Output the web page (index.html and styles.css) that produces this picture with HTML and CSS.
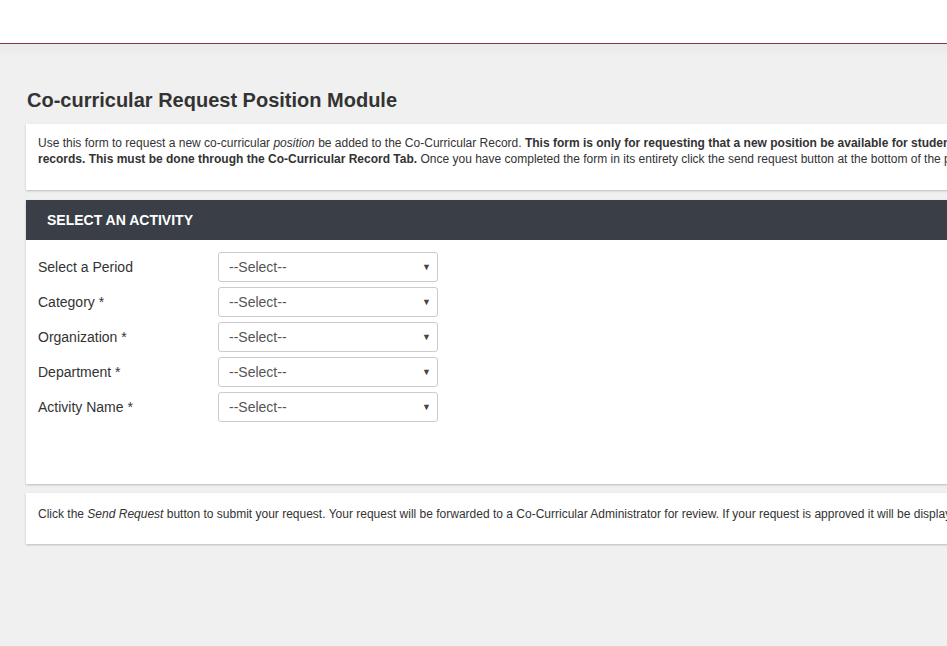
FILE: index.html
```html
<!DOCTYPE html>
<html>
<head>
<meta charset="utf-8">
<link rel="stylesheet" href="styles.css">
</head>
<body>
<header class="topbar"></header>
<main class="content">
  <h1 class="page-title">Co-curricular Request Position Module</h1>
  <section class="panel intro">
    <p>Use this form to request a new co-curricular <em>position</em> be added to the Co-Curricular Record. <strong>This form is only for requesting that a new position be available for students to add to their co-curricular<br>records. This must be done through the Co-Curricular Record Tab.</strong> Once you have completed the form in its entirety click the send request button at the bottom of the page.</p>
  </section>
  <section class="panel activity">
    <div class="panel-heading">SELECT AN ACTIVITY</div>
    <div class="panel-body">
      <div class="form-row"><label>Select a Period</label><div class="select"><span>--Select--</span><span class="caret">&#9660;</span></div></div>
      <div class="form-row"><label>Category *</label><div class="select"><span>--Select--</span><span class="caret">&#9660;</span></div></div>
      <div class="form-row"><label>Organization *</label><div class="select"><span>--Select--</span><span class="caret">&#9660;</span></div></div>
      <div class="form-row"><label>Department *</label><div class="select"><span>--Select--</span><span class="caret">&#9660;</span></div></div>
      <div class="form-row"><label>Activity Name *</label><div class="select"><span>--Select--</span><span class="caret">&#9660;</span></div></div>
    </div>
  </section>
  <section class="panel footer-note">
    <p>Click the <em>Send Request</em> button to submit your request. Your request will be forwarded to a Co-Curricular Administrator for review. If your request is approved it will be displayed in the list of available positions.</p>
  </section>
</main>
</body>
</html>
```

FILE: styles.css
```css
html, body {
  margin: 0;
  padding: 0;
}
body {
  background: #f0f0f0;
  font-family: "Liberation Sans", Arial, sans-serif;
  color: #333;
  overflow: hidden;
  width: 947px;
  height: 646px;
}
.topbar {
  height: 43px;
  background: #fff;
  border-bottom: 1px solid #8a3350;
}
.content {
  padding: 45px 0 0 26px;
  width: 1300px;
  background: linear-gradient(#e9e9e9, #f0f0f0 14px);
}
.page-title {
  margin: 0 0 13px 1px;
  font-size: 20px;
  line-height: 22px;
  font-weight: bold;
  color: #333;
}
.panel {
  background: #fff;
  box-shadow: 0 1px 2px rgba(0,0,0,0.22);
  margin-bottom: 10px;
}
.panel p {
  margin: 0;
  font-size: 12px;
  line-height: 16px;
  white-space: nowrap;
}
.intro {
  padding: 11px 12px 23px;
}
.panel-heading {
  background: #3a3f47;
  color: #fff;
  font-weight: bold;
  font-size: 14px;
  height: 40px;
  line-height: 40px;
  padding-left: 21px;
}
.panel-body {
  padding: 12px 12px 62px;
  display: flex;
  flex-direction: column;
  gap: 5px;
}
.form-row {
  display: flex;
  align-items: center;
  height: 30px;
}
.form-row label {
  width: 180px;
  font-size: 14px;
  color: #333;
}
.select {
  height: 28px;
  width: 202px;
  border: 1px solid #ccc;
  border-radius: 3px;
  display: flex;
  align-items: center;
  justify-content: space-between;
  padding: 0 6px 0 10px;
  font-size: 14px;
  color: #555;
}
.caret {
  font-size: 9px;
  color: #444;
}
.activity {
  margin-bottom: 9px;
}
.footer-note {
  padding: 13px 12px 22px;
}
```
